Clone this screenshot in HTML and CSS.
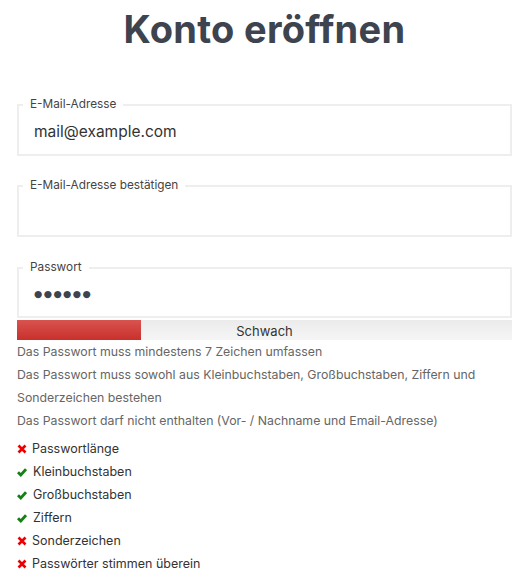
FILE: index.html
```html
<!DOCTYPE html>
<html lang="de">
<head>
<meta charset="utf-8">
<link rel="stylesheet" href="styles.css">
</head>
<body>
<div class="page">
  <h1 class="title">Konto eröffnen</h1>
  <fieldset class="field first">
    <legend class="label">E-Mail-Adresse</legend>
    <div class="value">mail@example.com</div>
  </fieldset>
  <fieldset class="field">
    <legend class="label">E-Mail-Adresse bestätigen</legend>
    <div class="value"></div>
  </fieldset>
  <fieldset class="field pw">
    <legend class="label">Passwort</legend>
    <div class="value dots">●●●●●●</div>
  </fieldset>
  <div class="meter">
    <div class="meter-fill" style="width:25%"></div>
    <div class="meter-text">Schwach</div>
  </div>
  <div class="help">
    <p>Das Passwort muss mindestens 7 Zeichen umfassen</p>
    <p>Das Passwort muss sowohl aus Kleinbuchstaben, Großbuchstaben, Ziffern und Sonderzeichen bestehen</p>
    <p>Das Passwort darf nicht enthalten (Vor- / Nachname und Email-Adresse)</p>
  </div>
  <ul class="checks">
    <li class="bad"><svg class="ic" viewBox="0 0 10 10"><path d="M1.5 1.5 L8.5 8.5 M8.5 1.5 L1.5 8.5" /></svg>Passwortlänge</li>
    <li class="good"><svg class="ic" viewBox="0 0 10 10"><path d="M1 5.2 L3.8 8 L9 2.2" /></svg>Kleinbuchstaben</li>
    <li class="good"><svg class="ic" viewBox="0 0 10 10"><path d="M1 5.2 L3.8 8 L9 2.2" /></svg>Großbuchstaben</li>
    <li class="good"><svg class="ic" viewBox="0 0 10 10"><path d="M1 5.2 L3.8 8 L9 2.2" /></svg>Ziffern</li>
    <li class="bad"><svg class="ic" viewBox="0 0 10 10"><path d="M1.5 1.5 L8.5 8.5 M8.5 1.5 L1.5 8.5" /></svg>Sonderzeichen</li>
    <li class="bad"><svg class="ic" viewBox="0 0 10 10"><path d="M1.5 1.5 L8.5 8.5 M8.5 1.5 L1.5 8.5" /></svg>Passwörter stimmen überein</li>
  </ul>
</div>
</body>
</html>
```
FILE: styles.css
```css
html, body {
  margin: 0;
  padding: 0;
  background: #fff;
}
body {
  font-family: Inter, "Noto Sans", sans-serif;
  color: #333;
}
.page {
  padding: 0 15px 0 17px;
}
.title {
  margin: 0;
  padding-top: 6px;
  text-align: center;
  font-size: 38px;
  line-height: 46px;
  font-weight: 700;
  color: #3e444f;
  letter-spacing: 0.3px;
}
.field {
  margin: 0;
  padding: 0 4px;
  border: 2px solid #eee;
  min-width: 0;
}
.field.first {
  margin-top: 46px;
}
.field + .field {
  margin-top: 23px;
}
.field.pw {
  margin-top: 24px;
}
.label {
  padding: 0 7px;
  font-size: 11.8px;
  line-height: 13px;
  color: #444;
}
.value {
  height: 43px;
  line-height: 41px;
  padding-left: 11px;
  font-size: 15.5px;
  color: #333;
}
.field.pw .value {
  height: 42px;
  line-height: 40px;
}
.dots {
  font-family: "DejaVu Sans", sans-serif;
  font-size: 9.5px;
  letter-spacing: 1.4px;
  color: #3e444f;
}
.meter {
  position: relative;
  height: 20px;
  margin-top: 2px;
  background: linear-gradient(#ebebeb, #f5f5f5);
}
.meter-fill {
  height: 100%;
  background: linear-gradient(#d9534f, #c9302c);
}
.meter-text {
  position: absolute;
  inset: 0;
  text-align: center;
  font-size: 13px;
  line-height: 22px;
  color: #333;
}
.help {
  font-size: 12.3px;
  color: #666;
}
.help p {
  margin: 0;
  line-height: 23px;
}
.checks {
  list-style: none;
  margin: 5px 0 0;
  padding: 0;
  font-size: 12.5px;
  color: #333;
}
.checks li {
  display: flex;
  align-items: center;
  height: 23px;
}
.ic {
  width: 10px;
  height: 10px;
  margin-right: 5px;
  fill: none;
  stroke-width: 2.4;
}
.bad .ic { stroke: #e00; stroke-width: 2.6; }
.good .ic { stroke: #168016; stroke-width: 2.8; margin-right: 6px; }
```
